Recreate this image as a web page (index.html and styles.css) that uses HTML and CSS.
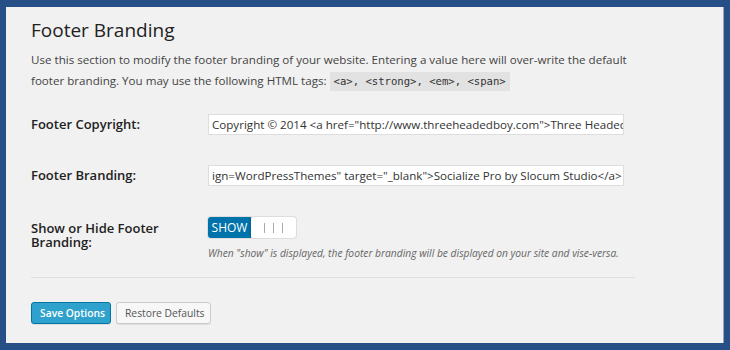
FILE: index.html
```html
<!DOCTYPE html>
<html>
<head>
<meta charset="utf-8">
<link rel="stylesheet" href="styles.css">
</head>
<body>
<div class="panel">
  <h2 class="title">Footer Branding</h2>
  <p class="desc">Use this section to modify the footer branding of your website. Entering a value here will over-write the default footer branding. You may use the following HTML tags: <code class="tags">&lt;a&gt;, &lt;strong&gt;, &lt;em&gt;, &lt;span&gt;</code></p>
  <div class="form">
    <div class="row">
      <div class="label">Footer Copyright:</div>
      <div class="field"><div class="text">Copyright © 2014 &lt;a href="http://www.threeheadedboy.com"&gt;Three Headed Boy Design Studio&lt;/a&gt;</div></div>
    </div>
    <div class="row">
      <div class="label">Footer Branding:</div>
      <div class="field"><div class="text">ign=WordPressThemes" target="_blank"&gt;Socialize Pro by Slocum Studio&lt;/a&gt;</div></div>
    </div>
    <div class="row row-top">
      <div class="label">Show or Hide Footer Branding:</div>
      <div class="field">
        <div class="toggle"><span class="on">SHOW</span><span class="knob"><i></i><i></i><i></i></span></div>
        <p class="hint">When "show" is displayed, the footer branding will be displayed on your site and vise-versa.</p>
      </div>
    </div>
  </div>
  <hr class="sep">
  <div class="actions">
    <button class="btn primary">Save Options</button>
    <button class="btn">Restore Defaults</button>
  </div>
</div>
</body>
</html>
```
FILE: styles.css
```css
html, body { margin: 0; padding: 0; }
body {
  background: #264f87;
  padding: 7px 6px 7px 6px;
  font-family: "Open Sans", sans-serif;
  color: #444;
}
.panel {
  background: #f1f1f1;
  height: 336px;
  box-sizing: border-box;
  border-right: 1px solid #9aa6b8;
  padding: 10px 25px 0 25px;
}
.title {
  margin: 0;
  font-size: 19px;
  font-weight: 400;
  color: #222;
  line-height: 26px;
}
.desc {
  margin: 6px 0 0 0;
  max-width: 612px;
  font-size: 11.6px;
  line-height: 21px;
  color: #444;
}
.tags {
  display: inline-block;
  vertical-align: middle;
  font-family: "DejaVu Sans Mono", monospace;
  font-size: 10.6px;
  height: 19px;
  line-height: 19px;
  background: #e2e2e2;
  padding: 0 4px;
  margin-left: 0;
  color: #333;
}
.form { margin-top: 23px; }
.row {
  display: flex;
  align-items: center;
  margin-bottom: 30px;
}
.row-top { align-items: flex-start; }
.label {
  width: 177px;
  flex: none;
  font-size: 13px;
  font-weight: 600;
  color: #222;
  line-height: 14px;
  padding-right: 30px;
  padding-bottom: 2px;
  box-sizing: border-box;
}
.row-top .label { padding-top: 5px; padding-bottom: 0; }
.field { flex: none; }
.text {
  width: 416px;
  height: 21px;
  box-sizing: border-box;
  background: #fff;
  border: 1px solid #ddd;
  font-size: 11.6px;
  line-height: 19px;
  color: #333;
  padding: 0 3px;
  white-space: nowrap;
  overflow: hidden;
}
.toggle {
  display: flex;
  width: 88px;
  height: 21px;
  margin-top: 1px;
  border-radius: 3px;
  overflow: hidden;
  box-shadow: 0 0 0 1px #ddd;
}
.on {
  width: 43px;
  background: #0073aa;
  color: #fff;
  font-size: 12px;
  font-weight: 500;
  line-height: 21px;
  text-align: center;
}
.knob {
  flex: 1;
  background: #fff;
  display: flex;
  justify-content: center;
  align-items: center;
  gap: 8px;
  border-radius: 3px;
  box-shadow: -1px 0 2px rgba(0,0,0,0.15);
}
.knob i {
  width: 1px;
  height: 10px;
  background: #aaa;
}
.hint {
  margin: 8px 0 0 0;
  font-size: 10.25px;
  font-style: italic;
  color: #666;
  line-height: 14px;
  white-space: nowrap;
}
.sep {
  width: 604px;
  margin: -13px 0 0 0;
  border: 0;
  border-top: 1px solid #dedede;
}
.actions {
  display: flex;
  gap: 5px;
  margin-top: 24px;
}
.btn {
  font-family: "Open Sans", sans-serif;
  font-size: 10.3px;
  height: 22px;
  padding: 0 8px;
  white-space: nowrap;
  border-radius: 3px;
  border: 1px solid #ccc;
  background: #f7f7f7;
  color: #555;
  box-shadow: 0 1px 0 rgba(0,0,0,0.08);
}
.btn.primary {
  background: #2ea2cc;
  border-color: #0074a2;
  color: #fff;
  font-weight: 600;
  width: 80px;
}
.btn:not(.primary) { width: 95px; }
```
